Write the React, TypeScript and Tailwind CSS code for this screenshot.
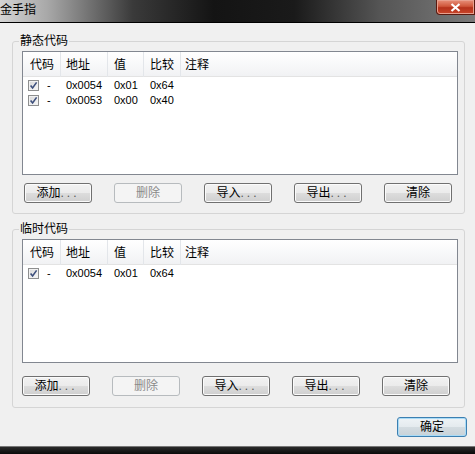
const font = { fontFamily: '"Liberation Sans", "Noto Sans CJK SC", sans-serif' };

const cols = 'grid grid-cols-[38px_47px_36px_37px_1fr]';

const Check = () => (
  <svg width="11" height="11" viewBox="0 0 11 11">
    <defs>
      <linearGradient id="cb" x1="0" y1="0" x2="1" y2="1">
        <stop offset="0" stopColor="#d6d6d6" />
        <stop offset="1" stopColor="#fbfbfb" />
      </linearGradient>
    </defs>
    <rect x="0.5" y="0.5" width="10" height="10" fill="url(#cb)" stroke="#8e8f8f" />
    <rect x="1.5" y="1.5" width="8" height="8" fill="none" stroke="#f2f2f2" />
    <path d="M2.6 5.4 L4.6 7.9 L8.6 2.4" fill="none" stroke="#3d4f7c" strokeWidth="1.6" />
  </svg>
);

type Row = { addr: string; val: string; cmp: string };

const CodeList = ({ rows }: { rows: Row[] }) => (
  <div className="h-[124px] w-[436px] border border-[#828790] bg-white">
    <div className={`${cols} h-[25px] border-b border-[#e3e3e3] bg-[linear-gradient(#ffffff,#f1f2f4)] text-[12px] leading-[24px] text-black`}>
      <div className="border-r border-[#e3e6ea] pl-[7px] pt-[1px]">代码</div>
      <div className="border-r border-[#e3e6ea] pl-[5px] pt-[1px]">地址</div>
      <div className="border-r border-[#e3e6ea] pl-[6px] pt-[1px]">值</div>
      <div className="border-r border-[#e3e6ea] pl-[6px] pt-[1px]">比较</div>
      <div className="pl-[4px] pt-[1px]">注释</div>
    </div>
    <div className="pt-[1px]">
      {rows.map((r, i) => (
        <div key={i} className={`${cols} h-[15px] items-center text-[11px] leading-[15px] text-black`}>
          <div className="flex items-center gap-[8px] pl-[5px]">
            <Check />
            <span>-</span>
          </div>
          <div className="pl-[5px]">{r.addr}</div>
          <div className="pl-[6px]">{r.val}</div>
          <div className="pl-[6px]">{r.cmp}</div>
          <div />
        </div>
      ))}
    </div>
  </div>
);

const Btn = ({ label, dots, disabled }: { label: string; dots?: boolean; disabled?: boolean }) => (
  <div
    className={
      disabled
        ? 'flex h-[20px] w-[68px] items-center justify-center rounded-[3px] border border-[#b7bbbe] bg-[#f4f4f4] text-[12px] text-[#8a8a8a]'
        : 'flex h-[20px] w-[68px] items-center justify-center rounded-[3px] border border-[#707070] bg-[linear-gradient(#f2f2f2_0%,#ebebeb_50%,#dddddd_50%,#cfcfcf_100%)] text-[12px] text-black shadow-[inset_0_0_0_1px_#fbfbfb]'
    }
  >
    {label}
    {dots && <span className="tracking-[3px] text-[#555]">...</span>}
  </div>
);

const Buttons = () => (
  <div className="flex gap-[22px]">
    <Btn label="添加" dots />
    <Btn label="删除" disabled />
    <Btn label="导入" dots />
    <Btn label="导出" dots />
    <Btn label="清除" />
  </div>
);

const Group = ({ title, rows, last }: { title: string; rows: Row[]; last?: boolean }) => (
  <fieldset
    className={`ml-[12px] mr-[10px] rounded-[3px] border border-[#d5d5d5] ${last ? 'mt-[8px] h-[186px]' : 'h-[180px]'}`}
  >
    <legend className="ml-[6px] px-[1px] text-[12px] leading-[14px] text-black">{title}</legend>
    <div className="mt-[3px] pl-[9px]">
      <CodeList rows={rows} />
    </div>
    <div className={last ? 'mt-[13px] pl-[9px]' : 'mt-[8px] pl-[11px]'}>
      <Buttons />
    </div>
  </fieldset>
);

export default function App() {
  return (
    <div className="h-[454px] w-[475px] overflow-hidden bg-[#f0f0f0]" style={font}>
      <div className="flex h-[23px] border-b border-black bg-[linear-gradient(90deg,#d4d4d4_0%,#a8a8a8_10%,#3a3a3a_28%,#141414_45%,#1a1a1a_62%,#555_80%,#7a7a7a_100%)]">
        <div className="pt-[3px] text-[12px] leading-[14px] text-black">金手指</div>
        <div className="ml-auto flex h-[15px] w-[39px] items-center justify-center rounded-bl-[4px] border border-t-0 border-[#5a1a10] bg-[linear-gradient(#e8907a_0%,#d0573b_45%,#b5321b_55%,#c9462b_100%)] shadow-[inset_0_0_0_1px_#e9a08e]">
          <svg width="11" height="9" viewBox="0 0 11 9">
            <path d="M1.5 1 L9.5 8 M9.5 1 L1.5 8" stroke="#fff" strokeWidth="2.2" />
          </svg>
        </div>
      </div>
      <div className="flex h-[423px] flex-col pt-[11px]">
        <Group
          title="静态代码"
          rows={[
            { addr: '0x0054', val: '0x01', cmp: '0x64' },
            { addr: '0x0053', val: '0x00', cmp: '0x40' },
          ]}
        />
        <Group title="临时代码" rows={[{ addr: '0x0054', val: '0x01', cmp: '0x64' }]} last />
        <div className="mt-[9px] flex justify-end pr-[8px]">
          <div className="flex h-[20px] w-[70px] items-center justify-center rounded-[3px] border border-[#3c7fb1] bg-[linear-gradient(#eef3f6_0%,#e4eaee_50%,#d4dce1_50%,#c8d2d8_100%)] text-[12px] text-black shadow-[inset_0_0_0_1px_#a9dbf6]">
            确定
          </div>
        </div>
      </div>
      <div className="h-[8px] border-t border-[#777] bg-[linear-gradient(#2a2a2a,#0a0a0a)]" />
    </div>
  );
}
